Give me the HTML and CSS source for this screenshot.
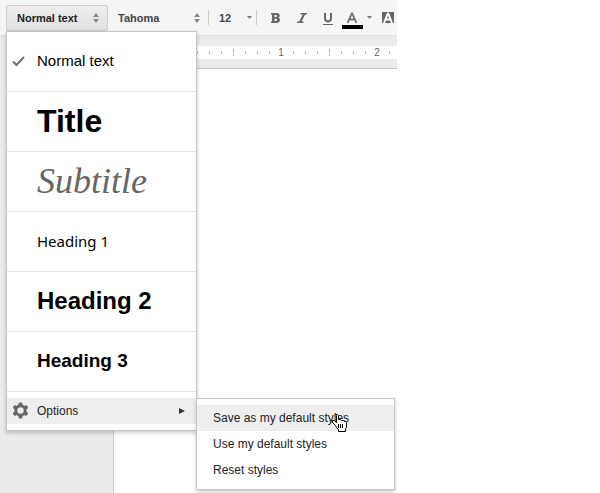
FILE: index.html
```
<!DOCTYPE html>
<html lang="en">
<head>
<meta charset="utf-8">
<title>Document styles</title>
<link rel="stylesheet" href="styles.css">
</head>
<body>
<div class="app">
  <header class="toolbar">
    <div class="style-picker">
      <button class="picker picker-open" type="button" aria-haspopup="menu" aria-expanded="true">
        Normal text
        <svg class="updown" viewBox="0 0 6 10"><path d="M3 0 6 4H0zM3 10 0 6h6z"/></svg>
      </button>
      <ul class="menu" role="menu">
        <li class="entry">
          <button class="style-item normal" type="button" role="menuitem">
            <svg class="check" viewBox="0 0 13 11"><path d="M1 5.500l3.500 3.500L12 1" fill="none" stroke="#707070" stroke-width="2"/></svg>
            Normal text
          </button>
        </li>
        <li class="entry"><button class="style-item title" type="button" role="menuitem">Title</button></li>
        <li class="entry"><button class="style-item subtitle" type="button" role="menuitem">Subtitle</button></li>
        <li class="entry"><button class="style-item heading1" type="button" role="menuitem">Heading 1</button></li>
        <li class="entry"><button class="style-item heading2" type="button" role="menuitem">Heading 2</button></li>
        <li class="entry"><button class="style-item heading3" type="button" role="menuitem">Heading 3</button></li>
        <li class="options">
          <button class="row row-active options-row" type="button" role="menuitem" aria-haspopup="menu">
            <svg class="gear" viewBox="-9 -9 18 18">
              <g fill="#666">
                <rect x="-2" y="-8.500" width="4" height="17" rx="1"/>
                <rect x="-2" y="-8.500" width="4" height="17" rx="1" transform="rotate(60)"/>
                <rect x="-2" y="-8.500" width="4" height="17" rx="1" transform="rotate(120)"/>
                <circle r="6.500"/>
              </g>
              <circle r="3.400" fill="#eee"/>
            </svg>
            Options
            <svg class="arrow" viewBox="0 0 6 6"><path d="M0 0l6 3-6 3z" fill="#333"/></svg>
          </button>
          <ul class="submenu" role="menu">
            <li>
              <button class="row row-active" type="button" role="menuitem">Save as my default styles</button>
              <svg class="pointer" viewBox="0 0 15 18">
                <path d="M3.500.5h2l1 1v4h2l1 1h2l1 1h1l1 1v5l-1 1v3h-7v-2l-2-2-1-2-3-3v-2h2l2 2v-7z" fill="#fff" stroke="#000"/>
                <path d="M6.500 10v4M8.500 10v4M10.500 10v4" stroke="#000"/>
              </svg>
            </li>
            <li><button class="row" type="button" role="menuitem">Use my default styles</button></li>
            <li><button class="row" type="button" role="menuitem">Reset styles</button></li>
          </ul>
        </li>
      </ul>
    </div>
    <button class="picker font-picker" type="button">
      Tahoma
      <svg class="updown" viewBox="0 0 6 10"><path d="M3 0 6 4H0zM3 10 0 6h6z"/></svg>
    </button>
    <button class="picker size-picker" type="button">
      12
      <svg class="down" viewBox="0 0 5 3"><path d="M0 0h5L2.500 3z"/></svg>
    </button>
    <div class="formatting">
      <button class="tool" type="button" aria-label="Bold">
        <svg viewBox="0 0 10 10"><path d="M0 0h5C9.500 0 9.500 3.800 7.500 4.700 10 5.500 9.500 10 5.500 10H0V8.500h1v-7H0zM3.500 2v2H5c1.500 0 1.500-2 0-2zm0 3.800V8H5c1.500 0 1.500-2.200 0-2.200z" fill="#666" fill-rule="evenodd"/></svg>
      </button>
      <button class="tool" type="button" aria-label="Italic">
        <svg viewBox="0 0 10 10"><path d="M3.500 0H10v1.500H8.200L4.500 8.500h2V10H0V8.500h2.200l3.700-7H3.500z" fill="#666"/></svg>
      </button>
      <button class="tool" type="button" aria-label="Underline">
        <svg class="underline" viewBox="0 0 10 14"><path d="M2 2v5c0 4.500 6 4.500 6 0V2" fill="none" stroke="#666" stroke-width="2"/><path d="M0 13h10v1H0z" fill="#666"/></svg>
      </button>
      <button class="color-tool" type="button" aria-label="Text color">
        <svg class="color-letter" viewBox="0 0 21 22"><path d="M5.500 16 9.800 6.500h.4L14.500 16M7.200 12.500h5.600" fill="none" stroke="#707070" stroke-width="1.800"/><path d="M0 18h21v4H0z"/></svg>
        <svg class="down" viewBox="0 0 5 3"><path d="M0 0h5L2.500 3z"/></svg>
      </button>
      <button class="tool highlight" type="button" aria-label="Highlight color">
        <svg viewBox="0 0 12 11"><path d="M0 0h12v11H0z" fill="#666"/><path d="M2 11 5.800 1.500h.4L10 11M3.500 7.500h5" fill="none" stroke="#fff" stroke-width="2"/></svg>
      </button>
    </div>
  </header>
  <div class="ruler" aria-hidden="true">
    <i class="tick"></i><i class="tick"></i><i class="tick"></i><i class="tick half"></i><i class="tick"></i><i class="tick"></i><i class="tick"></i><span class="inch">1</span><i class="tick"></i><i class="tick"></i><i class="tick"></i><i class="tick half"></i><i class="tick"></i><i class="tick"></i><i class="tick"></i><span class="inch">2</span><i class="tick"></i>
  </div>
  <main class="page"></main>
</div>
</body>
</html>
```
FILE: styles.css
```
* {
  box-sizing: border-box;
}

body {
  margin: 0;
  background: #fff;
  color: #222;
  font: 12px/16px "Liberation Sans", Arial, sans-serif;
}

ul {
  margin: 0;
  padding: 0;
  list-style: none;
}

button {
  margin: 0;
  padding: 0;
  border: 0;
  background: none;
  color: inherit;
  font: inherit;
  text-align: left;
}

svg {
  display: block;
  flex: none;
}

.app {
  display: flex;
  flex-direction: column;
  max-width: 397px;
  min-height: 100vh;
  background: #ebebeb;
}

.toolbar {
  display: flex;
  align-items: center;
  height: 36px;
  padding-left: 6px;
  border-bottom: 1px solid #e0e0e0;
  background: #f5f5f5;
}

.style-picker {
  position: relative;
  width: 102px;
}

.picker {
  display: flex;
  flex: none;
  align-items: center;
  justify-content: space-between;
  height: 26px;
  color: #444;
  font-size: 11px;
  font-weight: bold;
}

.picker-open {
  width: 100%;
  padding: 0 8px 0 10px;
  border: 1px solid #ccc;
  border-radius: 2px;
  background: linear-gradient(#eee, #e0e0e0);
  color: #222;
}

.font-picker {
  width: 100px;
  padding: 0 8px 0 10px;
}

.size-picker {
  width: 49px;
  height: 15px;
  padding: 0 4px 0 10px;
  border: solid #ccc;
  border-width: 0 1px;
}

.updown {
  width: 6px;
  height: 10px;
  fill: #888;
}

.down {
  width: 5px;
  height: 3px;
  fill: #777;
}

.formatting {
  display: flex;
  flex: 1;
  align-items: center;
  gap: 16px;
  padding-left: 14px;
  overflow: hidden;
}

.tool svg {
  width: 10px;
  height: 10px;
}

.tool .underline {
  height: 14px;
}

.color-tool {
  display: flex;
  align-items: center;
  gap: 4px;
  margin-left: -7px;
}

.color-letter {
  width: 21px;
  height: 22px;
}

.highlight {
  margin-left: -6px;
}

.highlight svg {
  width: 12px;
  height: 11px;
}

.ruler {
  display: flex;
  align-items: center;
  height: 13px;
  margin: 10px 0 9px 114px;
  padding-left: 77px;
  overflow: hidden;
  background: #fff;
  color: #666;
  font-size: 10px;
}

.tick,
.inch {
  flex: none;
  width: 12px;
  text-align: center;
}

.tick {
  height: 3px;
  background: linear-gradient(#bbb, #bbb) center / 1px 100% no-repeat;
}

.half {
  height: 7px;
}

.page {
  flex: 1;
  margin-left: 113px;
  border: solid #c8c8c8;
  border-width: 1px 0 0 1px;
  background: #fff;
}

.menu,
.submenu {
  position: absolute;
  border: 1px solid #c4c4c4;
  background: #fff;
  box-shadow: 0 2px 4px rgba(0, 0, 0, 0.2);
}

.menu {
  top: 100%;
  left: 0;
  width: 191px;
}

.entry {
  border-bottom: 1px solid #e5e5e5;
}

.style-item {
  display: flex;
  align-items: center;
  width: 100%;
  height: 59px;
  padding-left: 30px;
  color: #000;
}

.normal {
  padding-left: 5px;
  font-size: 15px;
}

.check {
  width: 13px;
  height: 11px;
  margin-right: 12px;
}

.title {
  font-size: 32px;
  font-weight: bold;
}

.subtitle {
  color: #666;
  font-family: "Liberation Serif", Georgia, serif;
  font-size: 36px;
  font-style: italic;
}

.heading1 {
  font-family: Tahoma, "Noto Sans", sans-serif;
  font-size: 15px;
}

.heading2 {
  font-size: 24px;
  font-weight: bold;
}

.heading3 {
  font-size: 19px;
  font-weight: bold;
}

.options {
  position: relative;
  margin: 6px 0;
}

.row {
  display: flex;
  align-items: center;
  width: 100%;
  height: 26px;
  padding: 0 16px;
}

.row-active {
  background: #eee;
}

.options-row {
  padding: 0 11px 0 5px;
}

.gear {
  width: 17px;
  height: 17px;
  margin-right: 8px;
}

.arrow {
  width: 6px;
  height: 6px;
  margin-left: auto;
}

.submenu {
  top: 0;
  left: 100%;
  width: 199px;
  padding: 6px 0;
}

.pointer {
  position: absolute;
  top: 15px;
  left: 135px;
  width: 15px;
  height: 18px;
}
```
